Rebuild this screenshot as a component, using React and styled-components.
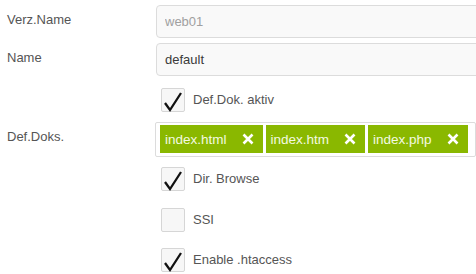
import React from "react";
import styled, { createGlobalStyle } from "styled-components";

const Global = createGlobalStyle`
  body {
    margin: 0;
    background: #fff;
    font-family: "Liberation Sans", Arial, sans-serif;
    overflow: hidden;
  }
`;

const Form = styled.div`
  width: 476px;
  padding-top: 5px;
  display: flex;
  flex-direction: column;
  overflow: hidden;
`;

const Row = styled.div`
  display: grid;
  grid-template-columns: 156px 1fr;
  height: ${(p) => p.h}px;
  margin-bottom: ${(p) => p.mb || 0}px;
`;

const Label = styled.div`
  padding: 5px 0 0 7px;
  font-size: 13px;
  line-height: 20px;
  color: #555;
`;

const Input = styled.input`
  box-sizing: border-box;
  width: calc(100% + 24px);
  height: 33px;
  border: 1px solid #dcdcdc;
  border-radius: 4px;
  background: #f9f9f9;
  padding: 0 8px;
  font-family: inherit;
  font-size: 13px;
  color: ${(p) => (p.disabled ? "#a0a0a0" : "#3a3a3a")};
  outline: none;
`;

const CheckCell = styled.label`
  display: flex;
  align-items: flex-start;
  padding: ${(p) => p.pt}px 0 0 5px;
`;

const Box = styled.span`
  box-sizing: border-box;
  width: 24px;
  height: 24px;
  border: 1px solid #d6d6d6;
  border-radius: 2px;
  background: #f7f7f7;
  display: flex;
  flex-shrink: 0;
`;

const CheckText = styled.span`
  margin-left: 8px;
  font-size: 13px;
  line-height: 24px;
  color: #555;
`;

const TagBox = styled.div`
  box-sizing: border-box;
  width: 321px;
  margin-left: -1px;
  height: 35px;
  border: 1px solid #dcdcdc;
  border-radius: 2px;
  padding: 2px 4px;
  display: flex;
  gap: 3px;
`;

const Tag = styled.span`
  display: flex;
  align-items: center;
  height: 28px;
  padding: 0 9px 0 5px;
  background: #8ab800;
  color: #f4fae2;
  font-size: 13.5px;
`;

const TagX = styled.svg`
  margin-left: 15px;
  width: 12px;
  height: 12px;
`;

const Check = ({ on }) => (
  <Box>
    {on && (
      <svg width="24" height="24" viewBox="0 0 24 24" style={{ overflow: "visible" }}>
        <path d="M3 14 L8 21 L19 4" fill="none" stroke="#111" strokeWidth="2.3" />
      </svg>
    )}
  </Box>
);

const CheckRow = ({ label, on, h, pt }) => (
  <Row h={h}>
    <div />
    <CheckCell pt={pt}>
      <Check on={on} />
      <CheckText>{label}</CheckText>
    </CheckCell>
  </Row>
);

const docs = ["index.html", "index.htm", "index.php"];

export default function App() {
  return (
    <>
      <Global />
      <Form>
        <Row h={33} mb={5}>
          <Label>Verz.Name</Label>
          <Input defaultValue="web01" disabled />
        </Row>
        <Row h={33}>
          <Label>Name</Label>
          <Input defaultValue="default" />
        </Row>
        <CheckRow label="Def.Dok. aktiv" on h={46} pt={12} />
        <Row h={35}>
          <Label>Def.Doks.</Label>
          <TagBox>
            {docs.map((d) => (
              <Tag key={d}>
                {d}
                <TagX viewBox="0 0 12 12">
                  <path d="M1.5 1.5 L10.5 10.5 M10.5 1.5 L1.5 10.5" stroke="#fff" strokeWidth="2.6" />
                </TagX>
              </Tag>
            ))}
          </TagBox>
        </Row>
        <CheckRow label="Dir. Browse" on h={40} pt={10} />
        <CheckRow label="SSI" h={40} pt={11} />
        <CheckRow label="Enable .htaccess" on h={40} pt={11} />
      </Form>
    </>
  );
}
